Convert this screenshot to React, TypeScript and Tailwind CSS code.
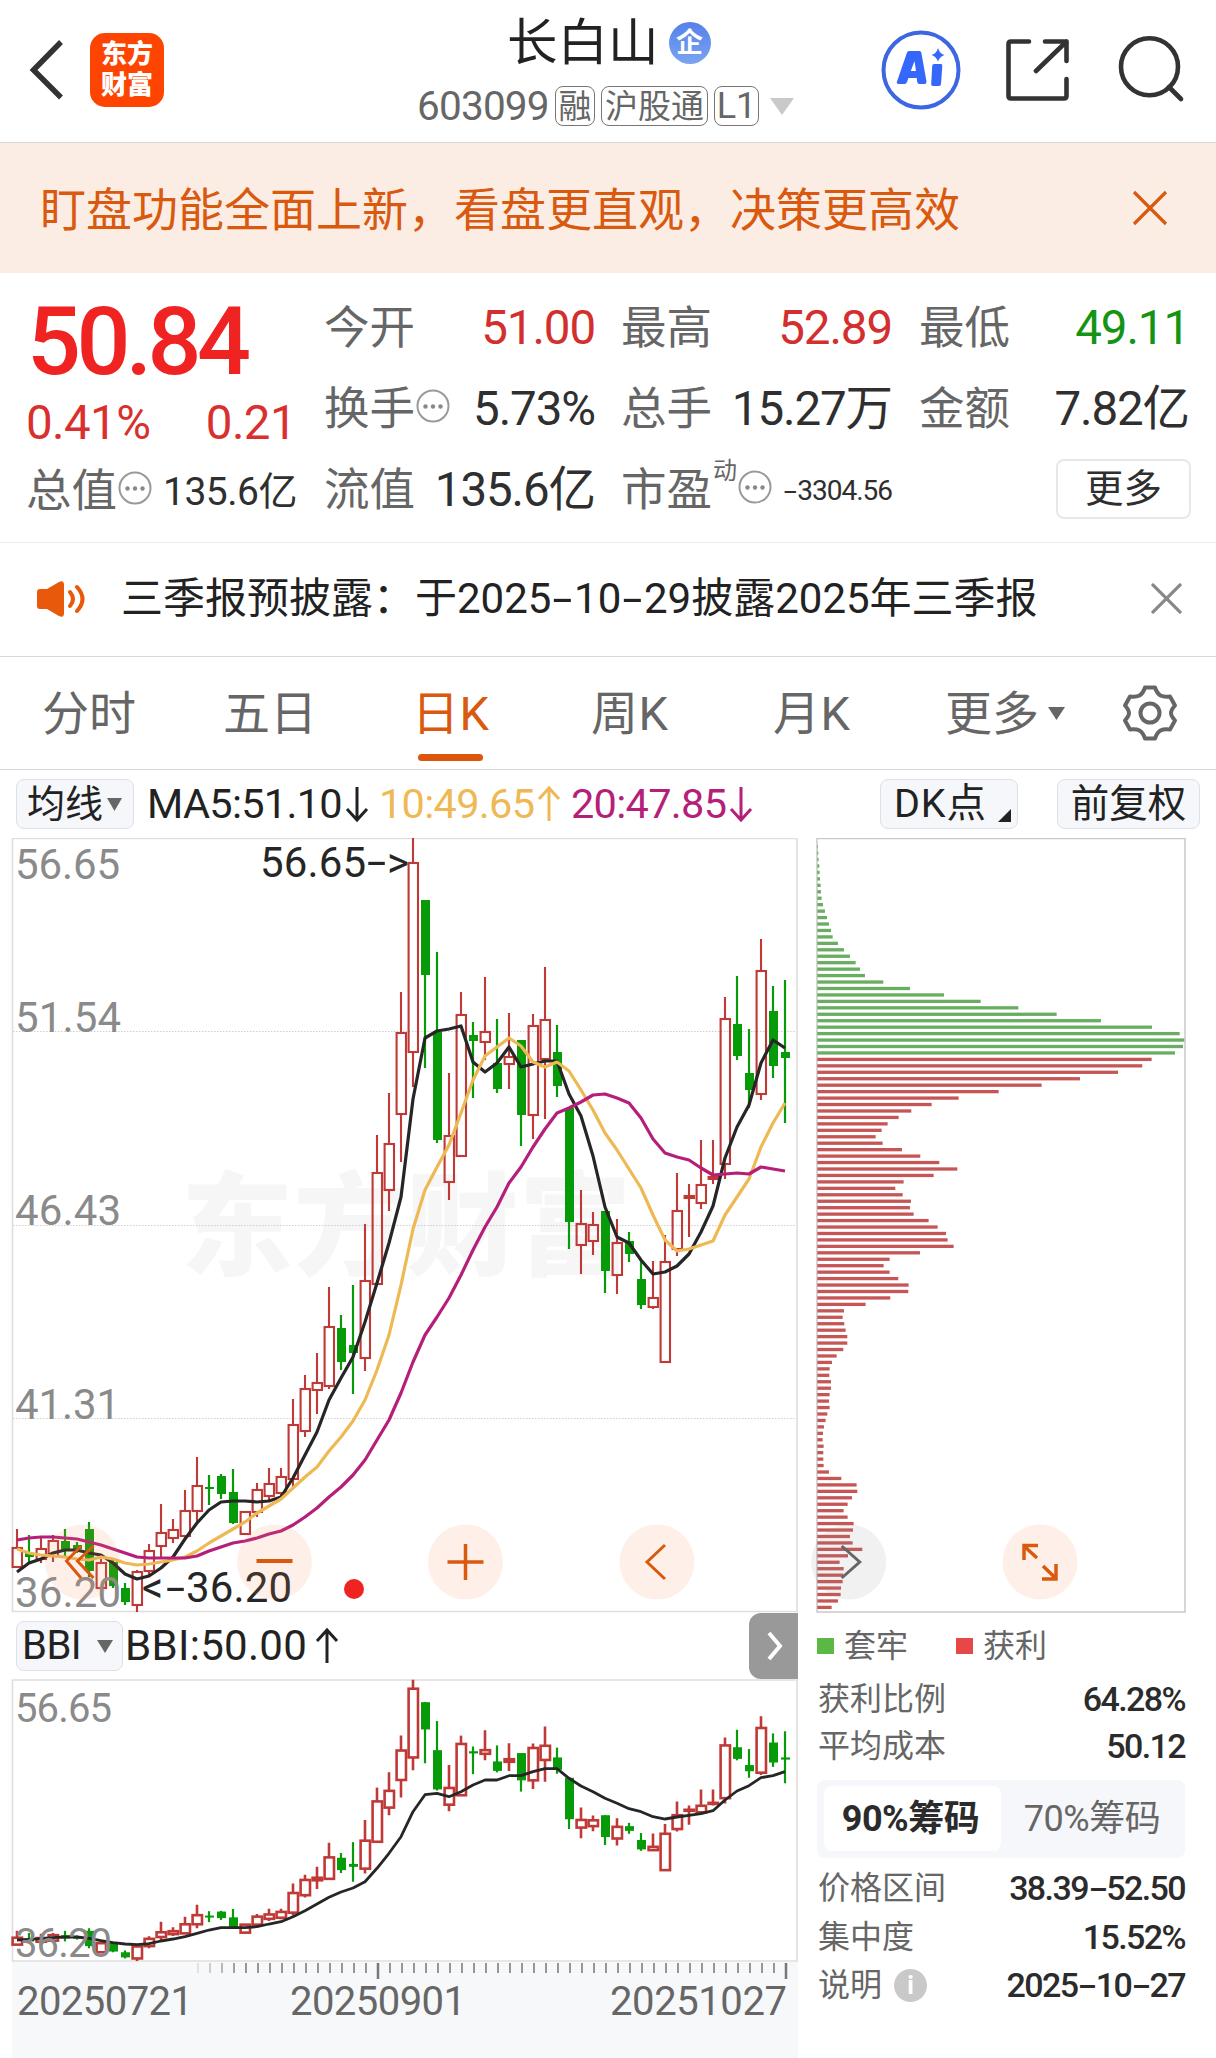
import React from 'react';

type Candle = [number, number, number, number, 0 | 1];

/* high, body top, body bottom, low, rising(1)/falling(0) */
const CANDLES: Candle[] = [
  [1529, 1548, 1567, 1567, 1], [1535, 1553, 1557, 1562, 0], [1537, 1549, 1559, 1563, 1], [1535, 1541, 1556, 1562, 1],
  [1529, 1541, 1550, 1558, 0], [1542, 1545, 1549, 1553, 0], [1522, 1529, 1571, 1577, 0], [1559, 1563, 1588, 1588, 1],
  [1560, 1562, 1586, 1588, 0], [1583, 1588, 1602, 1605, 0], [1570, 1572, 1605, 1612, 1], [1544, 1551, 1571, 1577, 1],
  [1504, 1533, 1546, 1557, 1], [1519, 1530, 1538, 1543, 1], [1490, 1511, 1536, 1538, 1], [1457, 1486, 1511, 1522, 1],
  [1475, 1487, 1489, 1505, 0], [1474, 1476, 1494, 1499, 0], [1469, 1492, 1523, 1524, 0], [1512, 1512, 1534, 1535, 1],
  [1483, 1490, 1512, 1517, 1], [1468, 1484, 1496, 1502, 1], [1468, 1477, 1493, 1497, 1], [1399, 1425, 1479, 1487, 1],
  [1375, 1389, 1431, 1437, 1], [1353, 1383, 1390, 1414, 1], [1287, 1327, 1386, 1389, 1], [1315, 1328, 1362, 1370, 0],
  [1285, 1345, 1353, 1394, 0], [1224, 1281, 1358, 1371, 1], [1135, 1173, 1284, 1284, 1], [1093, 1144, 1190, 1211, 1],
  [992, 1033, 1114, 1162, 1], [838, 863, 1052, 1087, 1], [900, 900, 975, 1068, 0], [952, 1032, 1140, 1143, 0],
  [1073, 1136, 1182, 1200, 1], [992, 1015, 1156, 1156, 1], [1022, 1035, 1041, 1098, 0], [977, 1032, 1042, 1060, 1],
  [1019, 1063, 1089, 1093, 0], [1013, 1057, 1064, 1089, 1], [1040, 1040, 1115, 1146, 0], [1014, 1026, 1115, 1139, 1],
  [967, 1020, 1059, 1119, 1], [1025, 1052, 1086, 1097, 0], [1107, 1108, 1222, 1249, 0], [1190, 1224, 1245, 1274, 1],
  [1212, 1225, 1241, 1255, 1], [1211, 1211, 1271, 1293, 0], [1219, 1243, 1275, 1294, 1], [1232, 1241, 1254, 1262, 0],
  [1260, 1279, 1305, 1309, 0], [1261, 1298, 1307, 1309, 1], [1235, 1262, 1362, 1362, 1], [1173, 1211, 1249, 1256, 1],
  [1184, 1196, 1198, 1237, 1], [1140, 1185, 1203, 1209, 1], [1140, 1177, 1179, 1184, 1], [997, 1019, 1164, 1179, 1],
  [976, 1024, 1056, 1060, 0], [1029, 1073, 1090, 1108, 0], [939, 971, 1094, 1100, 1], [986, 1011, 1066, 1078, 0],
  [980, 1052, 1058, 1123, 0],
];

const MA5 = [1572, 1563, 1559, 1553, 1550, 1550, 1553, 1555, 1563, 1574, 1579, 1576, 1568, 1557, 1539, 1523, 1510, 1502, 1501, 1501, 1502, 1501, 1497, 1478, 1455, 1432, 1400, 1378, 1357, 1322, 1283, 1243, 1197, 1099, 1038, 1031, 1029, 1026, 1062, 1072, 1063, 1047, 1067, 1064, 1061, 1061, 1094, 1116, 1156, 1207, 1237, 1243, 1260, 1274, 1272, 1266, 1254, 1232, 1206, 1158, 1127, 1105, 1063, 1040, 1048];
const MA10 = [1549, 1553, 1555, 1556, 1557, 1559, 1560, 1557, 1559, 1563, 1565, 1564, 1562, 1560, 1557, 1551, 1543, 1536, 1529, 1522, 1513, 1506, 1499, 1488, 1477, 1467, 1451, 1437, 1421, 1400, 1370, 1335, 1285, 1229, 1190, 1167, 1145, 1113, 1080, 1056, 1047, 1038, 1046, 1062, 1067, 1062, 1071, 1090, 1110, 1133, 1150, 1169, 1188, 1215, 1240, 1251, 1249, 1245, 1241, 1215, 1197, 1179, 1147, 1123, 1103];
const MA20 = [1540, 1538, 1537, 1537, 1538, 1539, 1542, 1545, 1549, 1553, 1557, 1558, 1558, 1558, 1558, 1556, 1551, 1547, 1543, 1541, 1538, 1534, 1531, 1525, 1517, 1508, 1497, 1487, 1475, 1460, 1440, 1420, 1393, 1362, 1335, 1317, 1298, 1275, 1250, 1227, 1207, 1183, 1167, 1147, 1129, 1113, 1108, 1102, 1095, 1094, 1098, 1103, 1118, 1139, 1153, 1157, 1160, 1168, 1175, 1174, 1173, 1174, 1167, 1169, 1171];
const BBI = [900, 898, 896, 893, 891, 891, 895, 902, 908, 912, 914, 911, 903, 897, 890, 880, 870, 863, 863, 863, 860, 852, 845, 830, 812, 792, 772, 756, 744, 725, 685, 640, 590, 515, 464, 460, 470, 455, 435, 420, 420, 407, 407, 395, 386, 386, 415, 438, 455, 475, 490, 506, 515, 530, 537, 531, 526, 521, 512, 480, 453, 437, 413, 407, 395].map((v) => 1640 + v / 3);

/* chip distribution, bar lengths in thirds of a pixel */
const TRAPPED = [2, 3, 4, 6, 7, 8, 10, 11, 13, 17, 23, 29, 35, 41, 46, 62, 80, 98, 115, 128, 143, 198, 278, 380, 490, 603, 718, 851, 1004, 1087, 1101, 1097, 1073];
const PROFIT = [1003, 975, 902, 788, 673, 544, 424, 343, 282, 244, 211, 193, 175, 196, 254, 309, 366, 420, 349, 259, 234, 256, 281, 278, 289, 334, 361, 386, 391, 409, 308, 217, 199, 217, 243, 274, 273, 219, 145, 80, 76, 81, 85, 90, 90, 78, 58, 44, 37, 36, 41, 41, 37, 35, 37, 30, 25, 20, 17, 16, 19, 18, 18, 19, 35, 72, 118, 120, 104, 91, 79, 91, 109, 107, 98, 106, 135, 92, 67, 79, 78, 76, 71, 70, 62, 43];

const cx = (i: number) => 17 + 12 * i;
const line = (ys: number[]) => ys.map((y, i) => `${cx(i)},${y.toFixed(1)}`).join(' ');

function Candles({ map, weight }: { map: (y: number) => number; weight: number }) {
  return (
    <>
      {CANDLES.map(([h, t, b, l, up], i) => {
        const x = cx(i);
        const [H, T, B, L] = [h, t, b, l].map(map);
        if (up) {
          return (
            <g key={i} stroke="#bf3936" strokeWidth={weight} fill="none">
              <path d={`M${x} ${H}V${T}M${x} ${B}V${L}`} />
              <rect x={x - 4.4} y={T} width="9.400" height={Math.max(B - T, 1)} />
            </g>
          );
        }
        return (
          <g key={i} fill="#079b0a">
            <rect x={x - 1.1} y={H} width="2.200" height={L - H} />
            <rect x={x - 4} y={T} width="9" height={Math.max(B - T, 2)} />
          </g>
        );
      })}
    </>
  );
}

/* Text whose hyphens are as wide as a digit */
function Wide({ text }: { text: string }) {
  return (
    <span>
      {text.split('-').map((part, i) => (
        <React.Fragment key={i}>
          {i > 0 && <span className="inline-block w-[0.540em] origin-center scale-x-[1.700] text-center">-</span>}
          {part}
        </React.Fragment>
      ))}
    </span>
  );
}

function Dots() {
  return (
    <svg className="-mt-[8px] ml-[1px] h-[34px] w-[34px] shrink-0" viewBox="0 0 34 34">
      <circle cx="17" cy="17" r="15.5" fill="none" stroke="#999" strokeWidth="2" />
      <circle cx="9.5" cy="17.5" r="2.2" fill="#888" />
      <circle cx="17" cy="17.5" r="2.2" fill="#888" />
      <circle cx="24.5" cy="17.5" r="2.2" fill="#888" />
    </svg>
  );
}

function Arrow({ up, color }: { up?: boolean; color: string }) {
  return (
    <svg className="h-[38px] w-[24px] shrink-0" viewBox="0 0 24 38" fill="none" stroke={color} strokeWidth="3">
      <path d={up ? 'M12 36V3M2 14L12 3L22 14' : 'M12 2V35M2 24L12 35L22 24'} />
    </svg>
  );
}

function Caret({ className }: { className: string }) {
  return (
    <svg className={className} viewBox="0 0 16 14" preserveAspectRatio="none">
      <path d="M0 0H16L8 14Z" fill="currentColor" />
    </svg>
  );
}

function Tag({ className, children }: { className: string; children: React.ReactNode }) {
  return (
    <span className={`flex h-[40px] items-center justify-center rounded-[8px] border-[1.5px] border-[#777] leading-none text-[#666] ${className}`}>
      {children}
    </span>
  );
}

function Label({ children }: { children: React.ReactNode }) {
  return <span className="-ml-[1px] text-[45.500px] leading-none tracking-normal text-[#666]">{children}</span>;
}

function InfoRow({ label, value, className }: { label: React.ReactNode; value: string; className: string }) {
  return (
    <div className={`flex items-center justify-between pl-[1px] leading-none ${className}`}>
      <span className="flex items-center text-[32px] text-[#666]">{label}</span>
      <span className="text-[34px] font-medium tracking-[-1.600px] text-[#2b2b2b]"><Wide text={value} /></span>
    </div>
  );
}

function Header() {
  return (
    <header className="flex h-[143px] items-start border-b border-[#d9d9d9]">
      <svg className="mt-[38px] ml-[26px] h-[64px] w-[40px]" viewBox="0 0 40 64" fill="none" stroke="#333" strokeWidth="5.5">
        <path d="M35 4L7.500 32L35 59.500" />
      </svg>
      <div className="mt-[33px] ml-[24px] flex h-[74px] w-[74px] flex-col items-center justify-center rounded-[15px] bg-[#fd4401] text-[26px] leading-[31px] font-black text-white">
        <span>东方</span>
        <span>财富</span>
      </div>
      <div className="ml-[244px] flex h-full w-[400px] flex-col">
        <div className="mt-[18px] flex h-[50px] items-center pl-[99px]">
          <span className="text-[50.500px] leading-none text-[#222]">长白山</span>
          <span className="ml-[10px] flex h-[42px] w-[42px] items-center justify-center rounded-full bg-gradient-to-b from-[#5580ea] to-[#7ba4f0] text-[27px] leading-none font-bold text-white">企</span>
        </div>
        <div className="mt-[18px] flex h-[40px] items-center pl-[9px]">
          <span className="w-[138px] text-[40.500px] leading-none tracking-[-0.800px] text-[#666]">603099</span>
          <Tag className="w-[40px] text-[33px]">融</Tag>
          <Tag className="ml-[6px] w-[107px] text-[33px]">沪股通</Tag>
          <Tag className="ml-[6px] w-[45px] text-[36px]">L1</Tag>
          <Caret className="ml-[11px] h-[17px] w-[24px] text-[#c9c9c9]" />
        </div>
      </div>
      <svg className="mt-[30px] ml-[73px] h-[80px] w-[80px]" viewBox="0 0 80 80">
        <circle cx="40" cy="40" r="37.500" fill="none" stroke="#3c66e2" strokeWidth="4" />
        <path fillRule="evenodd" d="M28 21H38.500Q40 21 40.300 22.500L45.500 51.500Q45.700 54 43.500 54H38.500Q36.500 54 36.200 52L35.800 48H27.500L26 52Q25.300 54 23.500 54H18Q15 54 16 51.500L26 22.500Q26.500 21 28 21ZM33.500 31L29.800 41H35Z" fill="#3667fb" />
        <path d="M53 34H60Q61.500 34 61.300 36L60 54Q59.800 56 58 56H52Q50 56 50.200 54L51.200 36Q51.300 34 53 34Z" fill="#3667fb" />
        <path d="M57 18Q58.500 23.500 63.500 25Q58.500 26.500 57 32Q55.500 26.500 50.500 25Q55.500 23.500 57 18Z" fill="#3667fb" />
      </svg>
      <svg className="mt-[36px] ml-[42px] h-[68px] w-[68px]" viewBox="0 0 68 68" fill="none" stroke="#333" strokeWidth="4.600" strokeLinecap="round" strokeLinejoin="round">
        <path d="M26 5.500H8Q5.500 5.500 5.500 8V60Q5.500 62.500 8 62.500H61Q63.500 62.500 63.500 60V43M42 5.500H63.500V25M63.500 5.500L33 35" />
      </svg>
      <svg className="mt-[34px] ml-[46px] h-[72px] w-[72px]" viewBox="0 0 72 72" fill="none" stroke="#333" strokeWidth="4.600" strokeLinecap="round">
        <circle cx="32.500" cy="32.800" r="28.500" />
        <path d="M52 53L64 65" />
      </svg>
    </header>
  );
}

function Quote() {
  return (
    <section className="flex h-[270px] border-b border-[#ebebeb] text-[#2f2f2f]">
      <div className="flex w-[325px] flex-col pl-[27px] leading-none">
        <div className="mt-[20px] flex h-[96px] items-center text-[95px] font-medium tracking-[-4.600px] text-[#f02323]">50.84</div>
        <div className="mt-[11px] -ml-[1px] flex h-[48px] w-[270px] items-center justify-between text-[47.500px] tracking-[-0.600px] text-[#d9302f]">
          <span>0.41%</span>
          <span>0.21</span>
        </div>
        <div className="mt-[20px] flex h-[48px] w-[270px] items-center">
          <Label>总值</Label>
          <Dots />
          <span className="ml-auto text-[39px] tracking-[-0.500px]">135.6亿</span>
        </div>
      </div>
      <div className="flex flex-1 flex-col text-[47.500px] leading-none tracking-[-1.100px]">
        <div className="mt-[32px] flex h-[48px] items-center">
          <div className="flex w-[270px] items-center justify-between"><Label>今开</Label><span className="text-[#d32f2f]">51.00</span></div>
          <div className="ml-[27px] flex w-[270px] items-center justify-between"><Label>最高</Label><span className="text-[#d32f2f]">52.89</span></div>
          <div className="ml-[28px] flex w-[269px] items-center justify-between"><Label>最低</Label><span className="text-[#149414]">49.11</span></div>
        </div>
        <div className="mt-[33px] flex h-[48px] items-center">
          <div className="flex w-[270px] items-center"><Label>换手</Label><Dots /><span className="ml-auto">5.73%</span></div>
          <div className="ml-[27px] flex w-[270px] items-center justify-between"><Label>总手</Label><span>15.27万</span></div>
          <div className="ml-[28px] flex w-[269px] items-center justify-between"><Label>金额</Label><span>7.82亿</span></div>
        </div>
        <div className="mt-[33px] flex h-[48px] items-center">
          <div className="flex w-[270px] items-center justify-between"><Label>流值</Label><span>135.6亿</span></div>
          <div className="ml-[27px] flex w-[270px] items-center">
            <Label>市盈</Label>
            <span className="-mt-[41px] ml-[1px] w-[24px] text-[24px] text-[#666]">动</span>
            <Dots />
            <span className="ml-auto text-[28px] tracking-[-1px]"><Wide text="-3304.56" /></span>
          </div>
          <div className="-mt-[4px] ml-[164px] flex h-[60px] w-[135px] items-center justify-center rounded-[8px] border-2 border-[#e8e8e8] text-[38.500px] tracking-normal">更多</div>
        </div>
      </div>
    </section>
  );
}

function Tabs() {
  return (
    <nav className="relative flex h-[113px] items-center border-b border-[#d5d9db] text-[47px] leading-none text-[#666]">
      <span className="ml-[42px] w-[181px] pt-[1px]">分时</span>
      <span className="w-[189px] pt-[1px]">五日</span>
      <span className="w-[179px] pt-[1px] tracking-[0.600px] text-[#d9590f]">日K</span>
      <span className="w-[182px] pt-[1px] tracking-[0.600px]">周K</span>
      <span className="w-[172px] pt-[1px] tracking-[0.600px]">月K</span>
      <span className="w-[103px] pt-[1px]">更多</span>
      <Caret className="h-[13px] w-[17px] text-[#666]" />
      <svg className="ml-[56px] h-[58px] w-[58px]" viewBox="0 0 58 58" fill="none" stroke="#666" strokeWidth="4" strokeLinejoin="round">
        <path d="M24 3.500H34Q36 9.500 39.500 11.500Q43 13.300 49 12.500L54 21.500Q50 26 50 29Q50 32 54 36.500L49 45.500Q43 44.700 39.500 46.500Q36 48.500 34 54.500H24Q22 48.500 18.500 46.500Q15 44.700 9 45.500L4 36.500Q8 32 8 29Q8 26 4 21.500L9 12.500Q15 13.300 18.500 11.500Q22 9.500 24 3.500Z" />
        <circle cx="29" cy="29" r="9.500" />
      </svg>
      <span className="absolute bottom-[8px] left-[418px] h-[7px] w-[65px] rounded-full bg-[#dd560b]" />
    </nav>
  );
}

const chip = 'flex h-[50px] items-center rounded-[8px] border-[1.500px] border-[#dde0e6] bg-[#f6f7fa] leading-none text-[#222]';

function Round({ x, children, gray }: { x: number; children: React.ReactNode; gray?: boolean }) {
  return (
    <g transform={`translate(${x} 1562)`} fill="none" stroke={gray ? '#666' : '#d9590f'} strokeWidth="3">
      <circle r="37.500" fill={gray ? '#888' : '#fb8b4b'} fillOpacity={gray ? 0.12 : 0.13} stroke="none" />
      {children}
    </g>
  );
}

function PriceChart() {
  return (
    <svg className="block h-[775px] w-[1216px]" viewBox="0 838 1216 775" fontFamily="Roboto, 'Noto Sans CJK SC', sans-serif">
      <text x="181" y="1267" fontSize="112" fontWeight="900" fill="#f6f6f6" textLength="450">东方财富</text>
      {[1031.5, 1225.500, 1418.500].map((y) => (
        <path key={y} d={`M13 ${y}H797`} stroke="#cfcfcf" strokeWidth="1" strokeDasharray="1.500 1.500" />
      ))}
      <path d="M12.500 838.500H797V1611.500H12.500Z" fill="none" stroke="#dedede" strokeWidth="1.600" />
      <Candles map={(y) => y} weight={2.1} />
      <g fill="none" strokeWidth="3.200" strokeLinejoin="round">
        <polyline points={line(MA5)} stroke="#262626" />
        <polyline points={line(MA10)} stroke="#eeb955" />
        <polyline points={line(MA20)} stroke="#b61f79" />
      </g>
      <g fontSize="42" fill="#8a8a8a">
        <text x="15" y="879" textLength="105">56.65</text>
        <text x="15" y="1032" textLength="106">51.54</text>
        <text x="15" y="1225" textLength="106">46.43</text>
        <text x="15" y="1418.500" textLength="105">41.31</text>
        <text x="15" y="1607" textLength="106">36.20</text>
      </g>
      <g fontSize="42" fill="#262626">
        <text x="260" y="877" textLength="106">56.65</text>
        <text transform="translate(367 876) scale(1.650 1)">-</text>
        <text transform="translate(387 877) scale(1 1)">&gt;</text>
        <text transform="translate(142 1602) scale(1 1)">&lt;</text>
        <text transform="translate(166 1602) scale(1.650 1)">-</text>
        <text x="186" y="1602" textLength="106">36.20</text>
      </g>
      <Round x={82.500}><path d="M-1.500 -16L-16 -1L-1.500 16M11 -16L-5 -1L11 16" /></Round>
      <Round x={274.500}><path d="M-18 -1H18" strokeWidth="4" /></Round>
      <Round x={465.500}><path d="M-18 0H18M0 -18V18" strokeWidth="3.500" /></Round>
      <Round x={657}><path d="M8 -17L-10 0L8 17" /></Round>
      <circle cx="354" cy="1589" r="10" fill="#f02323" />
      <path d="M817 838.500H1185V1612H817Z" fill="none" stroke="#c9c9c9" strokeWidth="1.500" />
      {TRAPPED.map((w, i) => <rect key={i} x="817.300" y={845 + i * 6.447} width={w / 3} height="3.300" fill="#68ad60" />)}
      {PROFIT.map((w, i) => <rect key={i} x="817.300" y={845 + (i + 33) * 6.447} width={w / 3} height="3.300" fill="#c65656" />)}
      <Round x={848.700} gray><path d="M-7 -16L11 0L-7 16" /></Round>
      <Round x={1040}><path d="M-3 -4L-16 -16M-16 -2V-16.500H-2M3 4L16 16.500M16 2V17H2" strokeWidth="3.500" /></Round>
    </svg>
  );
}

function BbiPane() {
  return (
    <div className="w-[798px]">
      <div className="flex h-[66px] items-center leading-none">
        <div className={`${chip} ml-[16px] w-[107px] pl-[5px] text-[40px] tracking-[-0.500px]`}>
          BBI
          <Caret className="ml-[16px] h-[13px] w-[16px] text-[#666]" />
        </div>
        <span className="ml-[2px] w-[190px] text-[42px] tracking-[0.300px] text-[#222]">BBI:50.00</span>
        <Arrow up color="#222" />
        <div className="ml-auto flex h-[66px] w-[49px] items-center justify-center rounded-l-[12px] bg-[#999]">
          <svg className="ml-[3px] h-[30px] w-[18px]" viewBox="0 0 18 30" fill="none" stroke="#fff" strokeWidth="4"><path d="M3 2L14 15L3 28" /></svg>
        </div>
      </div>
      <svg className="block h-[379px] w-[798px]" viewBox="0 1679 798 379" fontFamily="Roboto, 'Noto Sans CJK SC', sans-serif">
        <rect x="12" y="1962" width="786" height="96" fill="#f7f8fa" />
        <path d="M12.500 1680H797V1961H12.500Z" fill="none" stroke="#dedede" strokeWidth="1.600" />
        <Candles map={(y) => 1680 + ((y - 839) * 281) / 773} weight={2.6} />
        <polyline points={line(BBI)} fill="none" stroke="#262626" strokeWidth="2.800" strokeLinejoin="round" />
        {Array.from({ length: 50 }, (_, k) => k + 15).map((i) => {
          const major = i === 30 || i === 64;
          return <path key={i} d={`M${cx(i) + 1} 1963V${major ? 1979 : 1973}`} stroke="#777" strokeWidth={major ? 2.5 : 1.500} opacity={Math.min(1, (i - 14) * 0.22)} />;
        })}
        <g fontSize="40" fill="#8a8a8a">
          <text x="15" y="1722" textLength="97">56.65</text>
          <text x="15" y="1957" textLength="97">36.20</text>
        </g>
        <g fontSize="40" fill="#666">
          <text x="17" y="2015" textLength="176">20250721</text>
          <text x="290" y="2015" textLength="176">20250901</text>
          <text x="610" y="2015" textLength="177">20251027</text>
        </g>
      </svg>
    </div>
  );
}

function ChipStats() {
  return (
    <div className="ml-[19px] w-[368px]">
      <div className="mt-[16px] flex h-[34px] items-center text-[32px] leading-none text-[#666]">
        <span className="h-[16px] w-[17px] bg-[#5cb845]" />
        <span className="ml-[10px] w-[112px]">套牢</span>
        <span className="h-[16px] w-[17px] bg-[#e64848]" />
        <span className="ml-[10px]">获利</span>
      </div>
      <InfoRow className="mt-[19px] h-[34px]" label="获利比例" value="64.28%" />
      <InfoRow className="mt-[13px] h-[34px]" label="平均成本" value="50.12" />
      <div className="mt-[17px] flex h-[78px] items-center rounded-[8px] bg-[#f6f7fa] px-[7px] pb-[1px] text-[36px] leading-none tracking-[-0.500px]">
        <span className="flex h-[65px] w-[177px] items-center justify-center rounded-[8px] bg-white pr-[4px] font-bold text-[#2b2b2b]">90%筹码</span>
        <span className="flex flex-1 items-center justify-center pl-[5px] text-[#666]">70%筹码</span>
      </div>
      <InfoRow className="mt-[13px] h-[34px]" label="价格区间" value="38.39-52.50" />
      <InfoRow className="mt-[15px] h-[34px]" label="集中度" value="15.52%" />
      <InfoRow
        className="mt-[14px] h-[34px]"
        label={<>说明<i className="ml-[12px] flex h-[33px] w-[33px] items-center justify-center rounded-full bg-[#c9c9c9] text-[25px] font-bold text-white not-italic">i</i></>}
        value="2025-10-27"
      />
    </div>
  );
}

export default function App() {
  return (
    <main className="h-[2058px] w-[1216px] overflow-hidden bg-white font-[Roboto,'Noto_Sans_CJK_SC',sans-serif]">
      <Header />
      <div className="flex h-[130px] items-center justify-between bg-[#fcede4] pr-[48px] pl-[40px] text-[#d9590f]">
        <span className="pt-[3px] text-[46px] leading-none">盯盘功能全面上新，看盘更直观，决策更高效</span>
        <svg className="h-[36px] w-[36px]" viewBox="0 0 36 36" fill="none" stroke="currentColor" strokeWidth="3.200"><path d="M2 2L34 34M34 2L2 34" /></svg>
      </div>
      <Quote />
      <div className="flex h-[114px] items-center border-b border-[#d5d9db] pr-[34px] pb-[2px] pl-[36px]">
        <svg className="h-[42px] w-[50px]" viewBox="0 0 50 42" fill="#e8590c">
          <path d="M4 11H11L23 4Q28 1.500 28 7V35Q28 40.500 23 38L11 31H4Q1 31 1 28V14Q1 11 4 11Z" />
          <path d="M34 14Q40 21 34 28M41 9Q52 21 41 33" fill="none" stroke="#e8590c" strokeWidth="4" strokeLinecap="round" />
        </svg>
        <span className="ml-[35px] text-[42px] leading-none text-[#222]"><Wide text="三季报预披露：于2025-10-29披露2025年三季报" /></span>
        <svg className="ml-auto h-[31px] w-[31px]" viewBox="0 0 31 31" fill="none" stroke="#888" strokeWidth="3.200"><path d="M1 1L30 30M30 1L1 30" /></svg>
      </div>
      <Tabs />
      <div className="flex h-[68px] items-center text-[41.500px] leading-none tracking-[-0.700px]">
        <div className={`${chip} ml-[16px] w-[118px] pl-[10px] text-[38px] tracking-normal`}>
          均线
          <Caret className="ml-[4px] h-[13px] w-[15px] text-[#666]" />
        </div>
        <span className="ml-[13px] w-[198px] text-[#222]">MA5:51.10</span>
        <Arrow color="#222" />
        <span className="ml-[10px] w-[158px] text-[#eeb955]">10:49.65</span>
        <Arrow up color="#eeb955" />
        <span className="ml-[10px] w-[158px] text-[#b61f79]">20:47.85</span>
        <Arrow color="#b61f79" />
        <div className={`${chip} relative ml-[127px] w-[138px] pl-[13px] text-[39.500px] tracking-[0.900px]`}>
          DK点
          <svg className="absolute right-[6px] bottom-[6px] h-[13px] w-[13px]" viewBox="0 0 13 13"><path d="M13 0V13H0Z" fill="#222" /></svg>
        </div>
        <div className={`${chip} ml-[39px] w-[143px] justify-center text-[38.500px] tracking-normal`}>前复权</div>
      </div>
      <PriceChart />
      <div className="flex">
        <BbiPane />
        <ChipStats />
      </div>
    </main>
  );
}
